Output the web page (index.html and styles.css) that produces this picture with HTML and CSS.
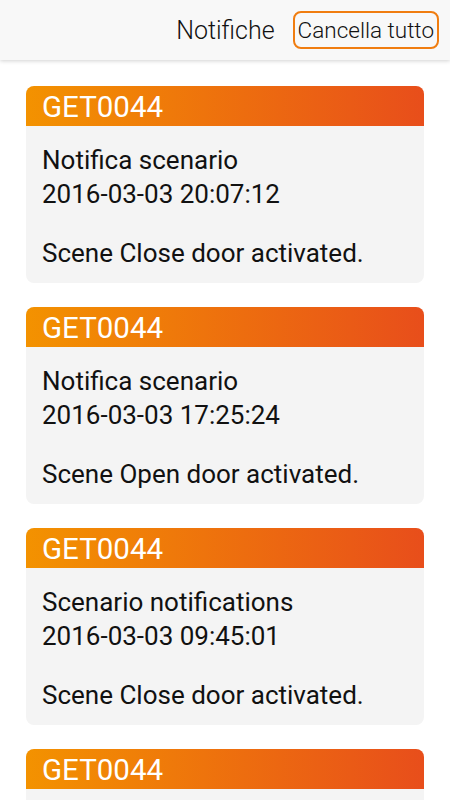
FILE: index.html
```html
<!DOCTYPE html>
<html lang="it">
<head>
  <meta charset="UTF-8" />
  <meta name="viewport" content="width=device-width, initial-scale=1.0"/>
  <title>Notifiche</title>
  <link rel="stylesheet" href="styles.css">
</head>
<body>

<header class="topbar">
  <span class="title">Notifiche</span>
  <button class="clear-btn">Cancella tutto</button>
</header>

<main class="list">
  <div class="card">
    <div class="card-head">GET0044</div>
    <div class="card-body">
      <p>Notifica scenario<br>2016-03-03 20:07:12</p>
      <p class="msg">Scene Close door activated.</p>
    </div>
  </div>

  <div class="card">
    <div class="card-head">GET0044</div>
    <div class="card-body">
      <p>Notifica scenario<br>2016-03-03 17:25:24</p>
      <p class="msg">Scene Open door activated.</p>
    </div>
  </div>

  <div class="card">
    <div class="card-head">GET0044</div>
    <div class="card-body">
      <p>Scenario notifications<br>2016-03-03 09:45:01</p>
      <p class="msg">Scene Close door activated.</p>
    </div>
  </div>

  <div class="card">
    <div class="card-head">GET0044</div>
    <div class="card-body empty"></div>
  </div>
</main>

</body>
</html>
```

FILE: styles.css
```css
html, body {
  margin: 0;
  padding: 0;
  background: #fff;
  font-family: Roboto, "Noto Sans", sans-serif;
  color: #111;
  height: 800px;
  overflow: hidden;
}
.topbar {
  height: 60px;
  background: #f8f8f8;
  box-shadow: 0 1px 4px rgba(0,0,0,0.18);
  display: flex;
  align-items: center;
  justify-content: flex-end;
  padding-right: 11px;
  position: relative;
  z-index: 1;
}
.title {
  font-size: 25px;
  font-weight: 300;
  color: #111;
  margin-right: 18px;
}
.clear-btn {
  font-family: inherit;
  font-size: 22.5px;
  font-weight: 300;
  color: #111;
  background: transparent;
  border: 2px solid #f07d10;
  border-radius: 8px;
  height: 38px;
  padding: 0 3px;
  margin-top: -1px;
}
.list {
  padding: 26px 26px 0;
}
.card {
  margin-bottom: 24px;
  border-radius: 8px;
  overflow: hidden;
  background: #f4f4f4;
}
.card-head {
  height: 40px;
  line-height: 42px;
  padding-left: 16px;
  font-size: 29.5px;
  color: #fff;
  background: linear-gradient(to right, #f39200, #e84e1b);
}
.card-body {
  padding: 17px 16px 13px;
  font-size: 26px;
  line-height: 34px;
}
.card-body.empty {
  height: 100px;
}
.card-body p {
  margin: 0;
}
.card-body .msg {
  margin-top: 25px;
}
```
